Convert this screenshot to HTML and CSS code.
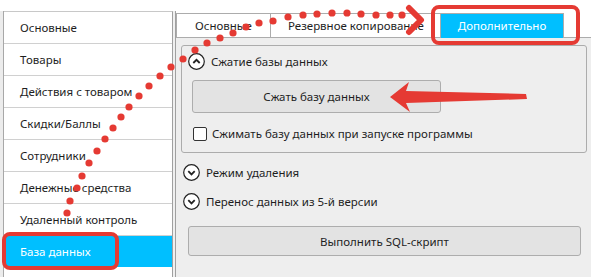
FILE: index.html
```html
<!DOCTYPE html>
<html lang="ru">
<head>
    <meta charset="UTF-8">
    <title>Настройки</title>
    <link rel="stylesheet" href="styles.css">
</head>
<body>
    <div class="app">
        <div class="edge"></div>
        <div class="nav">
            <div class="nav-item">Основные</div>
            <div class="nav-item">Товары</div>
            <div class="nav-item">Действия с товаром</div>
            <div class="nav-item">Скидки/Баллы</div>
            <div class="nav-item">Сотрудники</div>
            <div class="nav-item">Денежные средства</div>
            <div class="nav-item">Удаленный контроль</div>
            <div class="nav-item active">База данных</div>
        </div>
        <div class="splitter"></div>
        <div class="main">
            <div class="tabs">
                <div class="tab tab-main">Основные</div>
                <div class="tab tab-backup">Резервное копирование</div>
                <div class="tab tab-extra active">Дополнительно</div>
                <div class="tab-rest"></div>
            </div>
            <div class="panel">
                <div class="group">
                    <div class="expander">
                        <span class="exp-icon">
                            <svg width="17" height="17" viewBox="0 0 17 17"><circle cx="8.5" cy="8.5" r="7.8" fill="#fff" stroke="#222" stroke-width="1.2"/><path d="M5.3 10 L8.5 6.8 L11.7 10" fill="none" stroke="#222" stroke-width="1.8"/></svg>
                        </span>
                        Сжатие базы данных
                    </div>
                    <button class="btn btn-compress">Сжать базу данных</button>
                    <label class="check-row">
                        <span class="check"></span>
                        Сжимать базу данных при запуске программы
                    </label>
                </div>
                <div class="expander outer">
                    <span class="exp-icon">
                        <svg width="17" height="17" viewBox="0 0 17 17"><circle cx="8.5" cy="8.5" r="7.8" fill="#fff" stroke="#222" stroke-width="1.2"/><path d="M5.3 7.2 L8.5 10.4 L11.7 7.2" fill="none" stroke="#222" stroke-width="1.8"/></svg>
                    </span>
                    Режим удаления
                </div>
                <div class="expander outer second">
                    <span class="exp-icon">
                        <svg width="17" height="17" viewBox="0 0 17 17"><circle cx="8.5" cy="8.5" r="7.8" fill="#fff" stroke="#222" stroke-width="1.2"/><path d="M5.3 7.2 L8.5 10.4 L11.7 7.2" fill="none" stroke="#222" stroke-width="1.8"/></svg>
                    </span>
                    Перенос данных из 5-й версии
                </div>
                <button class="btn btn-sql">Выполнить SQL-скрипт</button>
            </div>
        </div>
    </div>

    <!-- red marks drawn over the screenshot -->
    <svg class="marks" width="591" height="277" viewBox="0 0 591 277">
        <g fill="#e53a33" id="dots"></g>
        <rect x="4" y="234" width="113" height="34" rx="6" fill="none" stroke="#e53a33" stroke-width="4"/>
        <rect x="433" y="7" width="145" height="36" rx="6" fill="none" stroke="#e53a33" stroke-width="4"/>
        <polyline points="409,8 421,20 409,32" fill="none" stroke="#e53a33" stroke-width="6" stroke-linejoin="round" stroke-linecap="round"/>
        <polygon points="390,97 409,82 406,91 526,94 527,99 406,103 410,112" fill="#e53a33"/>
    </svg>

    <script>
        // dotted path from the left menu to the tab
        const dots = [
            [67,213],[70,201],[77,188],[82,176],[89,163],[97,151],[105,139],[113,128],
            [121,117],[129,107],[139,96],[149,86],[160,76],[171,67],[183,59],[195,50],
            [207,43],[220,38],[233,33],[246,27],[259,23],[273,21],[288,17],[303,15],
            [317,14],[332,13],[347,13],[361,14],[376,15],[390,15],[402,15]
        ];
        document.getElementById('dots').innerHTML = dots
            .map(d => `<circle cx="${d[0]}" cy="${d[1]}" r="3.6"/>`)
            .join('');
    </script>
</body>
</html>
```

FILE: styles.css
```css
body {
    margin: 0;
    background: #fff;
    font-family: "Noto Sans", "Open Sans", sans-serif;
    font-size: 11.5px;
    color: #1e1e1e;
    overflow: hidden;
}
.app {
    display: flex;
    margin-top: 11px;
    height: 266px;
}
.edge {
    width: 3px;
    background: #ececec;
    border-right: 1px solid #a8a8a8;
}
.nav {
    width: 168px;
    border-top: 1px solid #c8c8c8;
    border-right: 1px solid #a0a0a0;
    background: #fff;
}
.nav-item {
    height: 31px;
    line-height: 31px;
    padding-left: 16px;
    border-bottom: 1px solid #d0d0d0;
    white-space: nowrap;
}
.nav-item.active {
    background: #00bfff;
    color: #fff;
    border-bottom: none;
}
.splitter {
    width: 2px;
    background: #f0f0f0;
    border-right: 1px solid #a0a0a0;
}
.main {
    flex: 1;
    display: flex;
    flex-direction: column;
}
.tabs {
    display: flex;
    align-items: flex-end;
    height: 27px;
}
.tab {
    height: 24px;
    line-height: 24px;
    border: 1px solid #acacac;
    border-bottom: none;
    background: #fff;
    white-space: nowrap;
    overflow: hidden;
    box-sizing: content-box;
}
.tab-main {
    width: 75px;
    padding-left: 18px;
    border-bottom: 1px solid #acacac;
    height: 23px;
}
.tab-backup {
    width: 152px;
    padding-left: 17px;
    border-left: none;
    border-bottom: 1px solid #acacac;
    height: 23px;
}
.tab.active {
    width: 122px;
    text-align: center;
    background: #00bfff;
    color: #fff;
    border-left: none;
}
.tab-rest {
    flex: 1;
    border-bottom: 1px solid #acacac;
}
.panel {
    flex: 1;
    background: #eeeeee;
    display: flex;
    flex-direction: column;
}
.group {
    margin: 7px 4px 0 5px;
    border: 1px solid #acacac;
    border-radius: 3px;
    padding: 7px 0 11px 6px;
    display: flex;
    flex-direction: column;
    align-items: flex-start;
}
.expander {
    display: flex;
    align-items: center;
    height: 17px;
    gap: 6px;
}
.exp-icon {
    display: flex;
}
.expander.outer {
    margin: 11px 0 0 7px;
}
.expander.second {
    margin-top: 12px;
}
.btn {
    font-family: inherit;
    font-size: 11.5px;
    color: #1e1e1e;
    background: #e3e3e3;
    border: 1px solid #adadad;
    border-radius: 3px;
}
.btn-compress {
    width: 249px;
    height: 33px;
    margin: 10px 0 0 4px;
}
.check-row {
    display: flex;
    align-items: center;
    gap: 5px;
    margin: 13px 0 0 5px;
}
.check {
    width: 12px;
    height: 12px;
    background: #fff;
    border: 1px solid #333;
    border-radius: 2px;
}
.btn-sql {
    height: 30px;
    margin: 16px 10px 0 12px;
}
.marks {
    position: absolute;
    top: 0;
    left: 0;
    pointer-events: none;
}
```
